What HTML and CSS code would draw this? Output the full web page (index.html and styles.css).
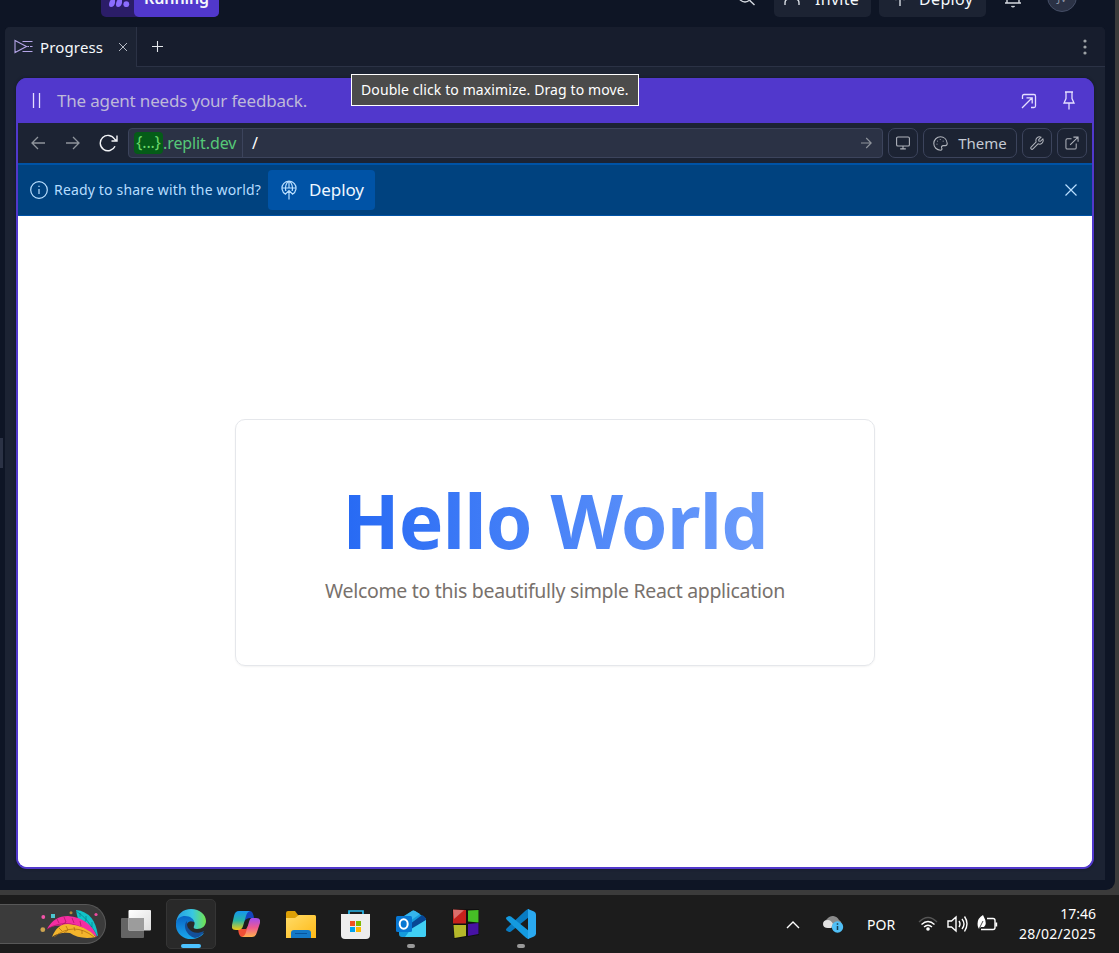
FILE: index.html
```html
<!DOCTYPE html>
<html lang="en">
<head>
<meta charset="utf-8">
<title>Progress</title>
<link rel="stylesheet" href="styles.css">
</head>
<body>
<div class="screen">
  <main class="window">
    <header class="topbar">
      <div class="run">
        <span class="run-icon"><svg width="24" height="16" viewBox="0 0 24 16"><path d="M2 14C2 9 6 7 8 4V12Q7 16 4 16Q2 16 2 14ZM9 14C9 9 13 6 15 3V12Q14 16 11 16Q9 16 9 14Z"/><circle cx="19.3" cy="13.2" r="2.9"/></svg></span>
        <span class="run-label"><span class="t-running">Running</span></span>
      </div>
      <div class="top-actions">
        <svg class="top-search" width="20" height="20" viewBox="0 0 20 20"><circle cx="9" cy="8.500" r="6.500"/><path d="M13.500 13.200l5 4.800"/></svg>
        <div class="top-btn invite"><svg width="18" height="20" viewBox="0 0 18 20"><circle cx="9" cy="6" r="4"/><path d="M2 18v-2q0-4 4-4h6q4 0 4 4v2"/></svg><span class="t-invite">Invite</span></div>
        <div class="top-btn deploy-top"><svg width="18" height="22" viewBox="0 0 18 22"><path d="M9 20V10M4.500 14L9 9.500l4.500 4.500M3 8a6 6 0 0 1 12 0"/></svg><span class="t-deploy-top">Deploy</span></div>
        <svg class="bell" width="20" height="22" viewBox="0 0 20 22"><path d="M4 16V9a6 6 0 0 1 12 0v7M2 16h16M8.500 19q1.500 1.800 3 0"/></svg>
        <span class="avatar">JV</span>
      </div>
    </header>
    <section class="pane">
      <nav class="tabs">
        <div class="tab">
          <svg width="19" height="15" viewBox="0 0 19 15" class="progress-icon"><path d="M1 1.500L12.500 7.500L1 13.500ZM8.500 2.500h10M13.500 7.500h1.500M16 7.500h2.500M8.500 12.500h10"/></svg>
          <span class="t-progress">Progress</span>
          <svg class="tab-close" width="10" height="10" viewBox="0 0 10 10"><path d="M1 1l8 8M9 1L1 9"/></svg>
        </div>
        <svg class="plus" width="11" height="11" viewBox="0 0 11 11"><path d="M5.500 0v11M0 5.500h11"/></svg>
        <svg class="dots" width="4" height="16" viewBox="0 0 4 16"><circle cx="2" cy="2" r="1.600"/><circle cx="2" cy="8" r="1.600"/><circle cx="2" cy="14" r="1.600"/></svg>
      </nav>
      <div class="stage">
        <article class="preview">
          <div class="agent">
            <svg width="9" height="15" viewBox="0 0 9 15"><path d="M1.500 0v15M7.500 0v15"/></svg>
            <span class="t-agent">The agent needs your feedback.</span>
            <svg class="expand" width="16" height="16" viewBox="0 0 16 16"><path d="M1.500 6V3q0-1.500 1.500-1.500h10q1.500 0 1.500 1.500v10q0 1.500-1.500 1.500H10M1 15L11.200 4.800M5.500 4.800h5.700v5.700"/></svg>
            <svg class="pin" width="12" height="19" viewBox="0 0 12 19"><path d="M2 1h8M3 1v6.500L1 12h10L9 7.500V1M6 12v6.500"/></svg>
          </div>
          <div class="tools">
            <svg class="arrow back" width="14" height="14" viewBox="0 0 14 14"><path d="M14 7H1M7 1L1 7l6 6"/></svg>
            <svg class="arrow fwd" width="14" height="14" viewBox="0 0 14 14"><path d="M0 7h13M7 1l6 6-6 6"/></svg>
            <svg class="reload" width="19" height="18" viewBox="0 0 19 18"><path d="M16 12.200A7.700 7.700 0 1 1 15.500 5L17.800 7M18 1.500v5.500h-5.500"/></svg>
            <div class="url">
              <div class="host"><span class="hidden-part">{...}</span><span class="t-host">.replit.dev</span></div>
              <span class="path">/</span>
              <svg class="go" width="11" height="12" viewBox="0 0 11 12"><path d="M0 6h10M5.200 1l5 5-5 5"/></svg>
            </div>
            <span class="tool"><svg width="14" height="14" viewBox="0 0 14 14"><rect x=".6" y="1" width="12.800" height="9" rx="1.300"/><path d="M7 10v3M4.200 12.900h5.600"/></svg></span>
            <span class="tool theme"><svg width="15" height="15" viewBox="0 0 15 15"><path d="M7.500.8a6.700 6.700 0 1 0 0 13.400c1.500 0 1.700-1.200 1.200-2.100-.7-1.400.3-2.500 1.600-2.500h2c1.400 0 2-1 1.900-2.300C13.800 3.500 11 .8 7.500.8Z"/><path d="M4 7.800v.8M4.500 4.800v.8M7.300 3.300v.8M10.200 4.700v.8"/></svg><span class="t-theme">Theme</span></span>
            <span class="tool"><svg width="14" height="14" viewBox="0 0 15 15"><path d="M9.300 3.800L11.800 1.200A4 4 0 0 0 6.600 6.400L1.200 11.800a1.400 1.400 0 0 0 2 2L8.600 8.400A4 4 0 0 0 13.800 3.200L11.200 5.700 9.500 5.500Z"/></svg></span>
            <span class="tool"><svg width="14" height="14" viewBox="0 0 15 15"><path d="M7 3H2.500Q1 3 1 4.500v8Q1 14 2.500 14h8q1.500 0 1.500-1.500V8M9 1.200h5v5M14 1.200L5.500 9.500"/></svg></span>
          </div>
          <div class="banner">
            <svg class="info" width="18" height="18" viewBox="0 0 18 18"><circle cx="9" cy="9" r="8.300"/><path d="M9 8v5M9 4.700v1.400"/></svg>
            <span class="t-ready">Ready to share with the world?</span>
            <span class="deploy"><svg width="16" height="20" viewBox="0 0 16 20"><path d="M4.500 14.200A7 7 0 1 1 11.500 14.200M1 8h14M4.800 11C4 7 5 2.500 8 1.200C11 2.500 12 7 11.200 11M8 1v7M8 19.500V11M4 14.500L8 10.500l4 4"/></svg><span class="t-deploy">Deploy</span></span>
            <svg class="dismiss" width="12" height="12" viewBox="0 0 12 12"><path d="M.5.5l11 11M11.500.5l-11 11"/></svg>
          </div>
          <div class="app">
            <div class="card">
              <h1>Hello World</h1>
              <p>Welcome to this beautifully simple React application</p>
            </div>
          </div>
        </article>
      </div>
    </section>
    <span class="grip"></span>
    <div class="tooltip"><span>Double click to maximize. Drag to move.</span></div>
  </main>
  <footer class="taskbar">
    <div class="search-pill">
      <svg width="62" height="32" viewBox="0 0 62 32">
        <path d="M36 1Q55 3 58 27Q39 24 36 1Z" fill="#12c2c8"/><path d="M36 2Q48 9 57 27M40 4v4M46 7v5l-4 1M52 13v5l-5-1" stroke="#067c87" stroke-width=".7"/>
        <path d="M7 20Q14 7 28 7Q50 9 57 28Q42 16 26 17Q14 15 7 20Z" fill="#f52da2"/><path d="M7 20Q31 6 55 28M17 10l2 4M24 8l2 5-4 3M32 9l2 5M40 12l1 5" stroke="#a4125f" stroke-width=".7"/>
        <path d="M12 28Q17 15 28 15Q47 17 56 28Q40 31 30 24Q19 23 12 28Z" fill="#f3b42c"/><path d="M14 28Q34 12 54 28M19 19l3 3M26 17l2 4-4 3M34 18l1 4M42 21v4" stroke="#a9690f" stroke-width=".7"/>
        <circle cx="3.300" cy="8" r="1.900" fill="#f255a9"/><rect x="11" y="5" width="4" height="4" fill="#4bc5cf"/><circle cx="2.800" cy="20.700" r="2.400" fill="#cda450"/><circle cx="31" cy="3.700" r="1.500" fill="#b78a38"/><circle cx="56" cy="5.500" r="1.600" fill="#ed4aa0"/>
      </svg>
    </div>
    <div class="apps">
      <span class="app-btn"><svg width="30" height="28" viewBox="0 0 30 28"><defs><linearGradient id="tv" x2="1" y2="1"><stop stop-color="#fff"/><stop offset="1" stop-color="#ddd"/></linearGradient></defs><rect y="8" width="23" height="20" rx="1" fill="#646464"/><rect x="7.500" width="22.500" height="20.500" rx="1" fill="url(#tv)"/><path d="M7.500 8H23v12.500H7.500Z" fill="#9c9c9c"/></svg></span>
      <span class="app-btn active"><svg width="30" height="30" viewBox="0 0 30 30"><defs><linearGradient id="edge1" x2="1"><stop stop-color="#249ce5"/><stop offset=".55" stop-color="#38c7e3"/><stop offset="1" stop-color="#72e44c"/></linearGradient><linearGradient id="edge2" y1="1" x2="0"><stop stop-color="#1aa8ed"/><stop offset="1" stop-color="#0864c5"/></linearGradient></defs><path d="M0 14C1 5 7 0 15 0c9 0 15 6 15 12 0 5-4 8-9 8-3 0-4-1-3-3 2-4-1-7-5-7C7 8 2 9 0 14Z" fill="url(#edge1)"/><path d="M0 14C1 9 5 7 9 7c5 0 9 3 9 6-7-3-9 4-6 8 3 5 9 6 16 3-3 4-8 6-13 6C6 30-1 23 0 14Z" fill="url(#edge2)"/><path d="M11 12C6 17 11 27 19 29c5-1 8-4 9-7-6 3-12 2-15-2-2-2-2-4-2-8Z" fill="#134f99"/></svg><i class="mark live"></i></span>
      <span class="app-btn"><svg width="28" height="26" viewBox="0 0 28 26"><defs><linearGradient id="cp1" x2="0" y2="1"><stop stop-color="#1595ef"/><stop offset=".5" stop-color="#29b6a5"/><stop offset="1" stop-color="#f4cc12"/></linearGradient><linearGradient id="cp2" x2="0" y2="1"><stop stop-color="#a14cf0"/><stop offset=".5" stop-color="#ee5a91"/><stop offset="1" stop-color="#ffb04c"/></linearGradient></defs><path d="M13 0h5q3 0 4 7h-4q-5 0-7 6Z" fill="#1445bd"/><path d="M6 18h8l4-6-3 10q-1 4-4 4h-1q-3 0-4-8Z" fill="#ef4f36"/><path d="M7 0h11q-3 1-4 5l-3 10q-1 4-5 4H4q-5 0-4-5L2 5q1-5 5-5Z" fill="url(#cp1)"/><path d="M20 7h4q5 0 4 5l-3 9q-1 5-5 5H10q3-1 4-5l3-10q1-4 3-4Z" fill="url(#cp2)"/></svg></span>
      <span class="app-btn"><svg width="30" height="27" viewBox="0 0 30 27"><defs><linearGradient id="fold" x2="1" y2="1"><stop stop-color="#ffdc69"/><stop offset="1" stop-color="#ffb915"/></linearGradient></defs><path d="M0 8V2Q0 0 2 0h7l3 4h16q2 0 2 2v5H0Z" fill="#dda006"/><path d="M0 7h9l4-3h15q2 0 2 2v21H0Z" fill="url(#fold)"/><path d="M5 27v-5q0-3 3-3h14q3 0 3 3v5Z" fill="#1478c6"/><path d="M9 22.500h12" stroke="#07539b"/></svg></span>
      <span class="app-btn"><svg width="30" height="30" viewBox="0 0 30 30"><path d="M8 6V2h14v4" fill="none" stroke="#27b8ed" stroke-width="1.700"/><path d="M0 5h29v21q0 4-4 4H4q-4 0-4-4Z" fill="#ededed"/><path d="M9 12h5v5H9Z" fill="#f25022"/><path d="M15 12h5v5h-5Z" fill="#7fba00"/><path d="M9 18h5v5H9Z" fill="#00a4ef"/><path d="M15 18h5v5h-5Z" fill="#ffb900"/></svg></span>
      <span class="app-btn"><svg width="30" height="28" viewBox="0 0 30 28"><path d="M3 9L16 1q1-1 3 0l9 6q2 1 2 3v15q0 2-3 2H6q-3 0-3-3Z" fill="#159bdc"/><path d="M7 7l9-6q1-1 3 0l5 3L11 13Z" fill="#35b4ec"/><path d="M14 14L26 5q4 2 4 5L16 20Z" fill="#074795"/><path d="M15 19l15-9v15q0 2-3 2H9Z" fill="#40cff4"/><rect y="6" width="16" height="16" rx="1.500" fill="#0877d2"/><ellipse cx="7.700" cy="14" rx="4" ry="4.700" fill="none" stroke="#fff" stroke-width="2"/></svg><i class="mark"></i></span>
      <span class="app-btn"><svg width="28" height="30" viewBox="0 0 28 30"><path d="M0 0h27v26L2 30Z" fill="#101010"/><path d="M1 .5l13 .5v13.500H1Z" fill="#c6211c"/><path d="M16 1.500l10.500-.5v12.500L16 12.500Z" fill="#46bd26"/><path d="M1.500 16H14v11L2.500 29Z" fill="#b5b82a"/><path d="M16 15l10.500-1v11L16 27Z" fill="#4712a4"/><path d="M1 .5l11 .8L2 10Z" fill="#fff" opacity=".35"/></svg></span>
      <span class="app-btn"><svg width="30" height="30" viewBox="0 0 30 30"><path d="M1 19q-2 2 0 3l2 1q1 0 2-.5L23 8V0h-1Q20 1 18 3Z" fill="#087bc2"/><path d="M1 11q-2-2 0-3l2-1q1 0 2 .5L23 22v8h-1q-2-1-4-3Z" fill="#149ae0"/><path d="M22 0l6 2.500q2 1 2 3v19q0 2-2 3L22 30Z" fill="#2aa9f0"/></svg><i class="mark"></i></span>
    </div>
    <div class="tray">
      <svg class="chev" width="14" height="9" viewBox="0 0 14 9"><path d="M1 8l6-6 6 6"/></svg>
      <svg class="cloud" width="21" height="18" viewBox="0 0 21 18"><path d="M5 13a5 5 0 0 1-1-9A7 7 0 0 1 16 5q4 2 2 8Z" fill="#8b8b8b"/><path d="M5 13q-5 0-5-4t5-4q3 0 5 4l-2 4Z" fill="#e2e2e2"/><circle cx="14.500" cy="12" r="5.700" fill="#50bff6"/><path d="M14.500 11v4M14.500 8.300v1.400" stroke="#163f55" stroke-width="1.500"/></svg>
      <span class="lang">POR</span>
      <svg class="wifi" width="20" height="16" viewBox="0 0 20 16"><path d="M1 6q9-9 18 0" stroke="#555"/><path d="M3.500 8.500q6.500-6 13 0M6 11q4-3.500 8 0"/><circle cx="10" cy="13" r="1.800" fill="#fff" stroke="none"/></svg>
      <svg class="sound" width="21" height="18" viewBox="0 0 21 18"><path d="M1 6h3.500L9 2v14l-4.500-4H1ZM12 6q2 3 0 6M15 4q4 5 0 10M17.500 1.500q5 7 0 15"/></svg>
      <svg class="battery" width="21" height="18" viewBox="0 0 21 18"><path d="M10 3.500h6q2 0 2 2v7q0 2-2 2H4M19.500 7.500v4"/><path d="M1 12Q-1 4 6 0q5 9 1 12H4l-2 2Z" fill="#fff" stroke="none"/><path d="M2 14L6 6" stroke="#1c1c1c" stroke-width=".8"/></svg>
      <div class="clock"><span>17:46</span><span class="date">28/02/2025</span></div>
    </div>
  </footer>
</div>
</body>
</html>
```
FILE: styles.css
```css
* { box-sizing: border-box; }
body { margin: 0; overflow: hidden; background: #3b3b3b; font-family: "Noto Sans", "Open Sans", sans-serif; }
svg { display: block; flex: none; fill: none; stroke: none; }
.screen { width: 1119px; height: 953px; display: flex; flex-direction: column; overflow: hidden; }
.window { position: relative; width: 1115px; height: 890px; padding: 0 10px 10px 5px; background: #0e1525; border-radius: 0 0 9px 0; display: flex; flex-direction: column; overflow: hidden; }
.topbar { flex: none; height: 32px; margin-top: -15px; margin-bottom: 10px; padding: 0 28px 0 96px; display: flex; justify-content: space-between; font-size: 16px; color: #f5f9fc; white-space: nowrap; }
.run { display: flex; width: 118px; background: #2b1d68; border-radius: 5px; }
.run-icon { width: 33px; padding: 6px 0 0 6px; }
.run-icon svg { fill: #8b6cff; }
.run-label { width: 85px; border-radius: 5px; background: #5138cc; display: flex; align-items: center; justify-content: center; font-weight: 600; letter-spacing: -.1px; padding-bottom: 7px; }
.top-actions { display: flex; color: #f5f9fc; }
.top-actions svg { stroke: #d5d9e0; stroke-width: 1.4; }
.top-search { margin: 2px 18px 0 0; }
.top-btn { display: flex; align-items: center; border-radius: 5px; background: #1c2333; }
.top-btn span { padding-bottom: 4px; }
.top-btn svg { margin-bottom: 9px; }
.t-invite { letter-spacing: .3px; }
.t-deploy-top { letter-spacing: .35px; }
.invite { width: 97px; padding-left: 9px; gap: 14px; margin-right: 8px; }
.deploy-top { width: 107px; padding-left: 12px; gap: 10px; margin-right: 17px; }
.bell { margin: 2px 24px 0 0; }
.avatar { width: 30px; height: 30px; margin-top: -3px; border: 1px solid #454e66; border-radius: 50%; background: #2b3245; color: #8d94a3; font-size: 11px; line-height: 29px; text-align: center; }
.pane { flex: 1; min-height: 0; display: flex; flex-direction: column; background: #1c2333; border-radius: 5px 5px 0 0; overflow: hidden; }
.tabs { flex: none; height: 40px; display: flex; align-items: center; background: #171d2d; border-bottom: 1px solid #2b3245; }
.tab { width: 132px; height: 40px; flex: none; display: flex; align-items: center; padding-left: 9px; background: #1c2333; border-right: 1px solid #2b3245; color: #f5f9fc; font-size: 15px; }
.progress-icon { stroke: #b5a5e8; stroke-width: 1.1; margin-right: 7px; }
.t-progress { width: 64px; white-space: nowrap; letter-spacing: .15px; }
.tab-close { margin-left: 14px; stroke: #b5bac4; }
.plus { margin-left: 15px; stroke: #e5e8ec; stroke-width: 1.1; }
.dots { margin: 0 18px 0 auto; fill: #9da2a6; }
.stage { flex: 1; min-height: 0; padding: 11px; }
.preview { height: 791px; display: flex; flex-direction: column; border: 2px solid #5138cc; border-top: 0; border-radius: 11px; overflow: hidden; box-shadow: 0 0 3px #111827; background: linear-gradient(#5138cc 50px, #fff 50px); }
.agent { height: 45px; flex: none; display: flex; align-items: center; padding: 0 17px 0 14px; background: #5138cc; color: #beb9d9; font-size: 17px; }
.agent svg { stroke: #e5dfff; stroke-width: 1.3; }
.t-agent { margin-left: 16px; white-space: nowrap; letter-spacing: -.18px; }
.expand { margin: 0 26px 0 auto; }
.tools { height: 40px; flex: none; display: flex; align-items: center; background: #1c2333; padding: 0 5px 0 13px; }
.tools svg { stroke: #b0b4bc; stroke-width: 1.1; }
.tools .arrow { stroke: #8f949c; stroke-width: 1.3; }
.fwd { margin-left: 21px; }
.tools .reload { margin: 0 10px 0 19px; stroke: #f1f3f6; stroke-width: 1.4; }
.url { width: 755px; height: 30px; flex: none; display: flex; align-items: center; border: 1px solid #3c445c; border-radius: 4px; background: #2b3245; font-size: 16px; }
.host { width: 114px; height: 100%; display: flex; align-items: center; padding-left: 5px; border-right: 1px solid #3c445c; color: #56c878; white-space: nowrap; letter-spacing: -.1px; }
.hidden-part { width: 29px; height: 22px; background: #055c18; border-radius: 4px; line-height: 20px; text-align: center; color: #6cd96c; }
.path { margin-left: 9px; color: #fff; }
.tools .go { margin: 0 10px 0 auto; stroke: #8f949c; }
.tool { width: 30px; height: 30px; flex: none; display: flex; align-items: center; justify-content: center; border: 1px solid #3c445c; border-radius: 7px; margin-left: 5px; color: #c5cad4; }
.theme { width: 94px; gap: 10px; font-size: 15px; }
.t-theme { padding-bottom: 1px; }
.banner { height: 53px; flex: none; display: flex; align-items: center; background: #00427f; border-top: 1px solid #0053a6; border-bottom: 1px solid #0053a6; box-shadow: inset 0 1px #0053a6; padding: 0 15px 0 12px; color: #b5ddff; font-size: 14px; }
.banner svg { stroke: #b9dfff; stroke-width: 1.2; }
.t-ready { margin-left: 6px; width: 208px; white-space: nowrap; letter-spacing: .17px; }
.deploy { width: 107px; height: 40px; margin-left: 6px; padding-left: 13px; display: flex; align-items: center; background: #0053a6; border-radius: 4px; color: #eef7ff; font-size: 17px; gap: 12px; }
.t-deploy { letter-spacing: -.1px; }
.banner .dismiss { margin-left: auto; }
.app { flex: 1; display: flex; align-items: center; justify-content: center; padding-top: 1px; background: #fff; }
.card { width: 640px; height: 247px; border: 1px solid #e5e7eb; border-radius: 10px; box-shadow: 0 1px 2px #0000000d; display: flex; flex-direction: column; align-items: center; padding-top: 62px; }
h1 { margin: 0; font-size: 75px; line-height: 76px; font-weight: 700; letter-spacing: -.8px; white-space: nowrap; color: transparent; background: linear-gradient(90deg, #276af4, #6d9dfb); background-clip: text; -webkit-background-clip: text; }
p { margin: 19px 0 0; font-size: 19.5px; line-height: 28px; letter-spacing: -.31px; color: #78716c; white-space: nowrap; }
.grip { position: absolute; left: 0; top: 438px; width: 3px; height: 30px; background: #2b3245; }
.tooltip { position: absolute; left: 351px; top: 74px; width: 288px; height: 32px; background: #4b4b4b; border: 1px solid #fff; color: #fff; font-size: 14px; line-height: 29px; padding-left: 9px; letter-spacing: .1px; white-space: nowrap; }
.taskbar { height: 58px; margin-top: 5px; background: #1c1c1c; display: flex; align-items: center; flex: none; color: #fff; }
.search-pill { width: 106px; height: 40px; background: #3b3b3b; border: 1px solid #585858; border-left: 0; border-radius: 0 20px 20px 0; padding: 4px 0 0 40px; }
.apps { display: flex; gap: 5px; margin-left: 5px; }
.app-btn { position: relative; width: 50px; height: 50px; display: flex; align-items: center; justify-content: center; border: 1px solid transparent; border-radius: 5px; }
.active { background: #292929; border-color: #353535; }
.mark { position: absolute; bottom: 0; width: 8px; height: 4px; border-radius: 2px; background: #999; }
.live { width: 20px; background: #4cc2ff; }
.tray { display: flex; align-items: center; margin-left: auto; padding-right: 23px; font-size: 14px; }
.tray svg { stroke: #fff; stroke-width: 1.4; }
.cloud { margin-left: 23px; }
.tray .cloud { stroke: none; }
.lang { width: 30px; margin: 0 21px 0 23px; letter-spacing: .1px; }
.sound { margin-left: 9px; }
.battery { margin-left: 9px; }
.clock { width: 79px; margin-left: 19px; display: flex; flex-direction: column; align-items: flex-end; line-height: 20px; white-space: nowrap; }
.date { letter-spacing: .25px; }
```
